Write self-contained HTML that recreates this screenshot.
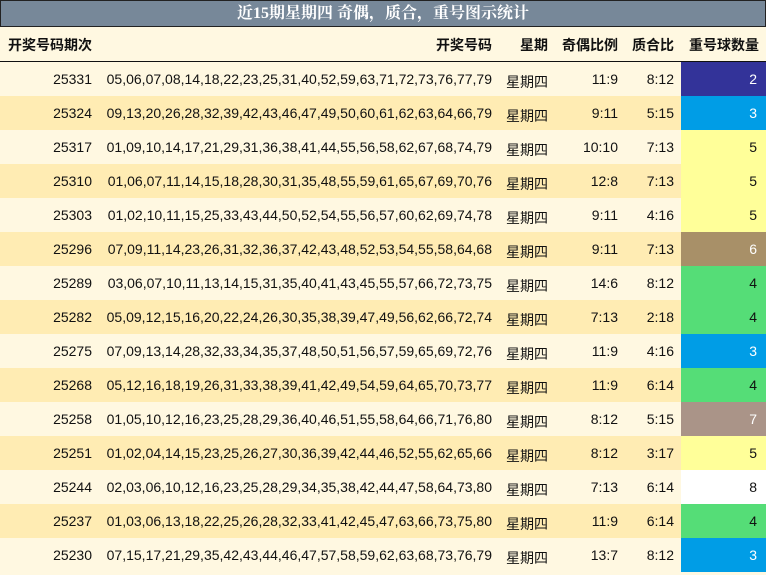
<!DOCTYPE html>
<html><head><meta charset="utf-8"><style>
*{margin:0;padding:0;box-sizing:border-box}
body{width:766px;height:573px;background:#fff8e1;font-family:"Liberation Sans","Noto Sans CJK SC",sans-serif;font-size:14px;color:#111;overflow:hidden;position:relative}
.title{position:absolute;left:0;top:0;width:766px;height:27px;background:#778899;border:1px solid #222;color:#fff;font-weight:bold;font-size:16px;text-align:center;line-height:26px;font-family:"Liberation Serif","Noto Serif CJK SC",serif}
.hdr{position:absolute;left:0;top:27px;width:766px;height:35px;border-bottom:1px solid #111;background:#fff8e1;font-weight:bold}
.row{position:absolute;left:0;width:766px;height:34px}
.c{position:absolute;top:0;height:100%;line-height:34px;text-align:right;white-space:nowrap}
.hdr .c{line-height:36px}
.c1{left:0;width:92px}
.c2{left:96px;width:396px}
.c3{left:496px;width:52px}
.row .c3{padding-top:3px}
.c4{left:552px;width:66px}
.c5{left:622px;width:52px}
.c6{left:681px;width:85px;padding-right:9px}
.hdr .c6{padding-right:7px}
.hdr .c1{left:8px;text-align:left;width:100px}
.o{background:#fff8e1}.e{background:#ffecb3}
</style></head><body>
<div class="title">近15期星期四 奇偶，质合，重号图示统计</div>
<div class="hdr"><div class="c c1">开奖号码期次</div><div class="c c2">开奖号码</div><div class="c c3">星期</div><div class="c c4">奇偶比例</div><div class="c c5">质合比</div><div class="c c6">重号球数量</div></div>

<div class="row o" style="top:62px"><div class="c c1">25331</div><div class="c c2">05,06,07,08,14,18,22,23,25,31,40,52,59,63,71,72,73,76,77,79</div><div class="c c3">星期四</div><div class="c c4">11:9</div><div class="c c5">8:12</div><div class="c c6" style="background:#333399;color:#fff">2</div></div>
<div class="row e" style="top:96px"><div class="c c1">25324</div><div class="c c2">09,13,20,26,28,32,39,42,43,46,47,49,50,60,61,62,63,64,66,79</div><div class="c c3">星期四</div><div class="c c4">9:11</div><div class="c c5">5:15</div><div class="c c6" style="background:#009de6;color:#fff">3</div></div>
<div class="row o" style="top:130px"><div class="c c1">25317</div><div class="c c2">01,09,10,14,17,21,29,31,36,38,41,44,55,56,58,62,67,68,74,79</div><div class="c c3">星期四</div><div class="c c4">10:10</div><div class="c c5">7:13</div><div class="c c6" style="background:#ffff99">5</div></div>
<div class="row e" style="top:164px"><div class="c c1">25310</div><div class="c c2">01,06,07,11,14,15,18,28,30,31,35,48,55,59,61,65,67,69,70,76</div><div class="c c3">星期四</div><div class="c c4">12:8</div><div class="c c5">7:13</div><div class="c c6" style="background:#ffff99">5</div></div>
<div class="row o" style="top:198px"><div class="c c1">25303</div><div class="c c2">01,02,10,11,15,25,33,43,44,50,52,54,55,56,57,60,62,69,74,78</div><div class="c c3">星期四</div><div class="c c4">9:11</div><div class="c c5">4:16</div><div class="c c6" style="background:#ffff99">5</div></div>
<div class="row e" style="top:232px"><div class="c c1">25296</div><div class="c c2">07,09,11,14,23,26,31,32,36,37,42,43,48,52,53,54,55,58,64,68</div><div class="c c3">星期四</div><div class="c c4">9:11</div><div class="c c5">7:13</div><div class="c c6" style="background:#a89068;color:#fff">6</div></div>
<div class="row o" style="top:266px"><div class="c c1">25289</div><div class="c c2">03,06,07,10,11,13,14,15,31,35,40,41,43,45,55,57,66,72,73,75</div><div class="c c3">星期四</div><div class="c c4">14:6</div><div class="c c5">8:12</div><div class="c c6" style="background:#55dd77">4</div></div>
<div class="row e" style="top:300px"><div class="c c1">25282</div><div class="c c2">05,09,12,15,16,20,22,24,26,30,35,38,39,47,49,56,62,66,72,74</div><div class="c c3">星期四</div><div class="c c4">7:13</div><div class="c c5">2:18</div><div class="c c6" style="background:#55dd77">4</div></div>
<div class="row o" style="top:334px"><div class="c c1">25275</div><div class="c c2">07,09,13,14,28,32,33,34,35,37,48,50,51,56,57,59,65,69,72,76</div><div class="c c3">星期四</div><div class="c c4">11:9</div><div class="c c5">4:16</div><div class="c c6" style="background:#009de6;color:#fff">3</div></div>
<div class="row e" style="top:368px"><div class="c c1">25268</div><div class="c c2">05,12,16,18,19,26,31,33,38,39,41,42,49,54,59,64,65,70,73,77</div><div class="c c3">星期四</div><div class="c c4">11:9</div><div class="c c5">6:14</div><div class="c c6" style="background:#55dd77">4</div></div>
<div class="row o" style="top:402px"><div class="c c1">25258</div><div class="c c2">01,05,10,12,16,23,25,28,29,36,40,46,51,55,58,64,66,71,76,80</div><div class="c c3">星期四</div><div class="c c4">8:12</div><div class="c c5">5:15</div><div class="c c6" style="background:#aa9488;color:#fff">7</div></div>
<div class="row e" style="top:436px"><div class="c c1">25251</div><div class="c c2">01,02,04,14,15,23,25,26,27,30,36,39,42,44,46,52,55,62,65,66</div><div class="c c3">星期四</div><div class="c c4">8:12</div><div class="c c5">3:17</div><div class="c c6" style="background:#ffff99">5</div></div>
<div class="row o" style="top:470px"><div class="c c1">25244</div><div class="c c2">02,03,06,10,12,16,23,25,28,29,34,35,38,42,44,47,58,64,73,80</div><div class="c c3">星期四</div><div class="c c4">7:13</div><div class="c c5">6:14</div><div class="c c6" style="background:#ffffff">8</div></div>
<div class="row e" style="top:504px"><div class="c c1">25237</div><div class="c c2">01,03,06,13,18,22,25,26,28,32,33,41,42,45,47,63,66,73,75,80</div><div class="c c3">星期四</div><div class="c c4">11:9</div><div class="c c5">6:14</div><div class="c c6" style="background:#55dd77">4</div></div>
<div class="row o" style="top:538px"><div class="c c1">25230</div><div class="c c2">07,15,17,21,29,35,42,43,44,46,47,57,58,59,62,63,68,73,76,79</div><div class="c c3">星期四</div><div class="c c4">13:7</div><div class="c c5">8:12</div><div class="c c6" style="background:#009de6;color:#fff">3</div></div>
</body></html>
